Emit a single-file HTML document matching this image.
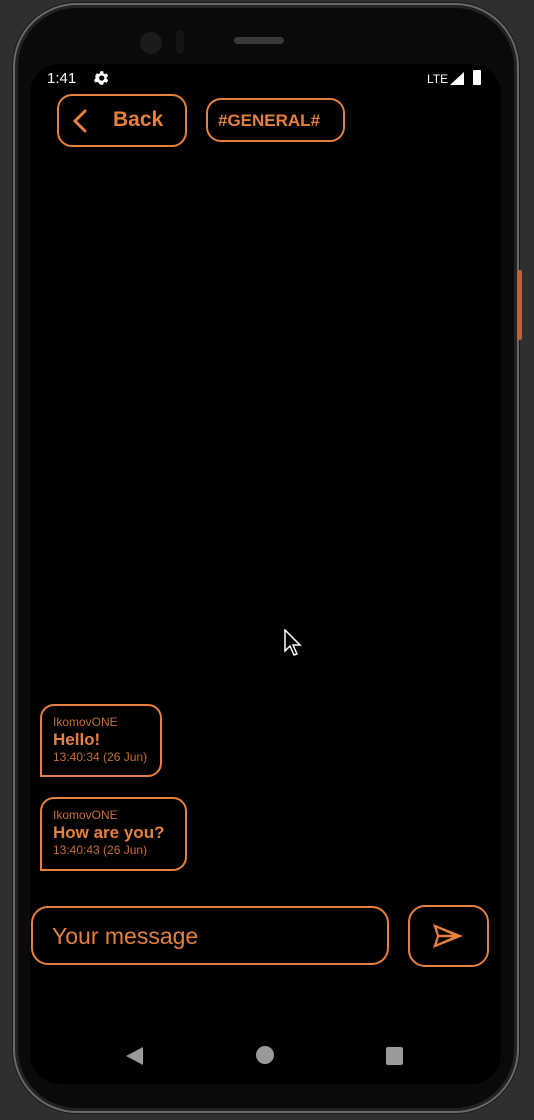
<!DOCTYPE html>
<html><head><meta charset="utf-8"><style>
*{margin:0;padding:0;box-sizing:border-box}
body{width:534px;height:1120px;background:#2e2f31;position:relative;overflow:hidden;font-family:"Liberation Sans",sans-serif}
.phone{position:absolute;left:13px;top:3px;width:506px;height:1110px;border-radius:64px;background:#0a0a0a;border:2px solid #6a6a6c;box-shadow:0 0 0 1px #1a1a1a,inset 0 0 0 3px #222}
.screen{position:absolute;left:30px;top:64px;width:471px;height:1020px;border-radius:30px;background:#000;overflow:hidden}
.btn{position:absolute;border:2px solid #e5803f;color:#e5803f;font-weight:bold}
.bub{position:absolute;border:2px solid #e5803f;border-radius:14px 14px 14px 0;color:#e5803f;padding:9px 0 0 11px}
.bub .u{font-size:12px;opacity:.85;line-height:14px}
.bub .m{font-size:17px;font-weight:bold;line-height:21px}
.bub .t{font-size:12px;opacity:.85;line-height:14px}
</style></head><body>
<div class="phone"></div>
<div style="position:absolute;left:517px;top:270px;width:5px;height:70px;background:#b8643a;border-radius:2px"></div>
<div style="position:absolute;left:140px;top:32px;width:22px;height:22px;border-radius:50%;background:#1b1b1d"></div>
<div style="position:absolute;left:176px;top:30px;width:8px;height:24px;border-radius:4px;background:#151517"></div>
<div style="position:absolute;left:234px;top:37px;width:50px;height:7px;border-radius:4px;background:#3a3a3c"></div>
<div class="screen">
  <div style="position:absolute;left:17px;top:6px;color:#fff;font-size:15px">1:41</div>
  <svg style="position:absolute;left:62px;top:5px" width="18" height="18" viewBox="0 0 24 24"><path fill="#fff" d="M19.4 13a7.5 7.5 0 0 0 0-2l2.1-1.6-2-3.5-2.5 1a7 7 0 0 0-1.7-1L15 3h-4l-.4 2.6a7 7 0 0 0-1.7 1l-2.5-1-2 3.5L4.6 11a7.5 7.5 0 0 0 0 2l-2.1 1.6 2 3.5 2.5-1a7 7 0 0 0 1.7 1L11 21h4l.4-2.6a7 7 0 0 0 1.7-1l2.5 1 2-3.5zM13 15.5a3.5 3.5 0 1 1 0-7 3.5 3.5 0 0 1 0 7z"/></svg>
  <div style="position:absolute;left:397px;top:8px;color:#fff;font-size:12px">LTE</div>
  <svg style="position:absolute;left:420px;top:8px" width="14" height="13"><path d="M14 0V13H0z" fill="#fff"/></svg>
  <div style="position:absolute;left:443px;top:6px;width:8px;height:15px;background:#fff;border-radius:1px"></div>
  <div class="btn" style="left:27px;top:30px;width:130px;height:53px;border-radius:15px;font-size:21px;padding:12px 0 0 54px">Back</div>
  <svg style="position:absolute;left:40px;top:44px" width="20" height="26" viewBox="0 0 20 26"><path d="M15 3L5 13l10 10" stroke="#e5803f" stroke-width="3" fill="none" stroke-linecap="round"/></svg>
  <div class="btn" style="left:176px;top:34px;width:139px;height:44px;border-radius:15px;font-size:17px;padding:11px 0 0 10px">#GENERAL#</div>
  <svg style="position:absolute;left:254px;top:565px" width="18" height="28" viewBox="0 0 18 28"><path d="M1 1v21l5-5 4 9 3-1-4-9h7z" fill="#000" stroke="#fff" stroke-width="1.5"/></svg>
  <div class="bub" style="left:10px;top:640px;width:122px;height:73px"><div class="u">IkomovONE</div><div class="m">Hello!</div><div class="t">13:40:34 (26 Jun)</div></div>
  <div class="bub" style="left:10px;top:733px;width:147px;height:74px"><div class="u">IkomovONE</div><div class="m">How are you?</div><div class="t">13:40:43 (26 Jun)</div></div>
  <div class="btn" style="left:1px;top:842px;width:358px;height:59px;border-radius:17px;font-weight:normal;font-size:23px;padding:15px 0 0 19px">Your message</div>
  <div class="btn" style="left:378px;top:841px;width:81px;height:62px;border-radius:17px"></div>
  <svg style="position:absolute;left:401px;top:858px" width="34" height="28" viewBox="0 0 34 28"><path d="M2 2L32 14 2 26 6 14z" fill="#e5803f"/><path d="M6 6L24 14 6 22 8 14z" fill="#000"/><path d="M6 14H24" stroke="#e5803f" stroke-width="2.5"/></svg>
  <svg style="position:absolute;left:95px;top:982px" width="20" height="20"><path d="M18 1V19L1 10z" fill="#9a9a9a"/></svg>
  <div style="position:absolute;left:226px;top:982px;width:18px;height:18px;border-radius:50%;background:#9a9a9a"></div>
  <div style="position:absolute;left:356px;top:983px;width:17px;height:18px;border-radius:2px;background:#9a9a9a"></div>
</div>
</body></html>
